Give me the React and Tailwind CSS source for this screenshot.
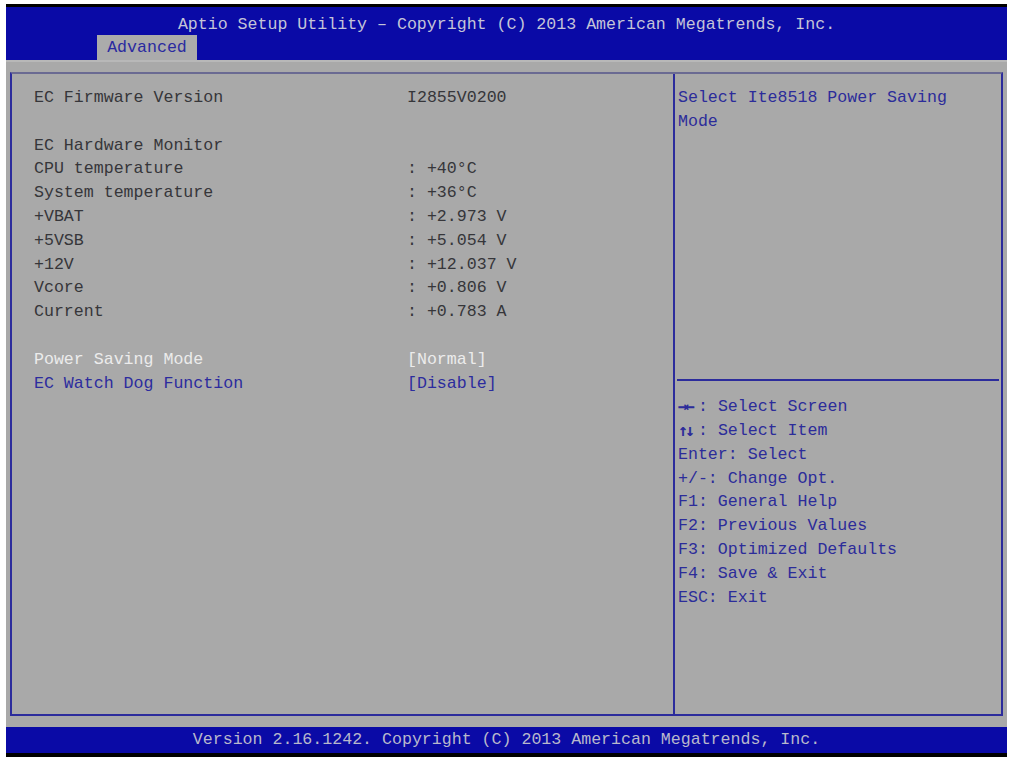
export default function App() {
  const mono = { fontFamily: '"Liberation Mono", "DejaVu Sans Mono", monospace' };
  const rows = [
    ["EC Firmware Version", "I2855V0200", "n"],
    null,
    ["EC Hardware Monitor", "", "n"],
    ["CPU temperature", ": +40°C", "n"],
    ["System temperature", ": +36°C", "n"],
    ["+VBAT", ": +2.973 V", "n"],
    ["+5VSB", ": +5.054 V", "n"],
    ["+12V", ": +12.037 V", "n"],
    ["Vcore", ": +0.806 V", "n"],
    ["Current", ": +0.783 A", "n"],
    null,
    ["Power Saving Mode", "[Normal]", "sel"],
    ["EC Watch Dog Function", "[Disable]", "opt"],
  ];
  const help = [
    ["→←", ": Select Screen"],
    ["↑↓", ": Select Item"],
    ["", "Enter: Select"],
    ["", "+/-: Change Opt."],
    ["", "F1: General Help"],
    ["", "F2: Previous Values"],
    ["", "F3: Optimized Defaults"],
    ["", "F4: Save & Exit"],
    ["", "ESC: Exit"],
  ];
  return (
    <div className="w-[1010px] h-[762px] bg-white pt-[4px] pl-[6px]" style={mono}>
      <div className="w-[1001px] h-[753px] flex flex-col text-[16.6px] whitespace-pre">
        {/* header */}
        <div className="h-[56px] border-t-[3px] border-black bg-[#0a0aa6] flex flex-col">
          <div className="pt-[8px] h-[28px] leading-[20px] text-center text-[#c4c4d8]">
            Aptio Setup Utility – Copyright (C) 2013 American Megatrends, Inc.
          </div>
          <div className="ml-[91px] w-[100px] h-[25px] bg-[#ababab] text-[#2a2aa0] leading-[25px] text-center">
            Advanced
          </div>
        </div>
        {/* main */}
        <div className="flex-1 bg-[#a9a9a9] pt-[10px] pl-[4px] pr-[4px] pb-[11px] border-t-[2px] border-[#b8b8b8]">
          <div className="h-full flex border-[2px] border-[#2c2c9c] border-t-[#6a6a92]">
            <div className="w-[663px] border-r-[2px] border-[#2c2c9c] pt-[12px] pl-[22px]">
              {rows.map((r, i) =>
                r === null ? (
                  <div key={i} className="h-[23.8px]" />
                ) : (
                  <div
                    key={i}
                    className={
                      "flex h-[23.8px] leading-[23.8px] " +
                      (r[2] === "sel"
                        ? "text-[#ececec]"
                        : r[2] === "opt"
                        ? "text-[#2c2c9e]"
                        : "text-[#36363a]")
                    }
                  >
                    <div className="w-[373px]">{r[0]}</div>
                    <div>{r[1]}</div>
                  </div>
                )
              )}
            </div>
            <div className="flex-1 flex flex-col text-[#2c2c9a]">
              <div className="h-[307px] border-b-[2px] border-[#2c2c9c] mx-[2px] pt-[12px] pl-[1px] leading-[23.8px]">
                <div>Select Ite8518 Power Saving</div>
                <div>Mode</div>
              </div>
              <div className="pt-[14px] pl-[3px] leading-[23.85px]">
                {help.map((h, i) => (
                  <div key={i} className="flex">
                    {h[0] && (
                      <span
                        className="w-[20px] font-bold tracking-[-3px]"
                        style={{ fontFamily: '"DejaVu Sans Mono", monospace' }}
                      >
                        {h[0]}
                      </span>
                    )}
                    <span>{h[1]}</span>
                  </div>
                ))}
              </div>
            </div>
          </div>
        </div>
        {/* footer */}
        <div className="h-[30px] bg-[#0a0aa6] border-b-[4px] border-black text-center text-[#b8b8cc] leading-[26px]">
          Version 2.16.1242. Copyright (C) 2013 American Megatrends, Inc.
        </div>
      </div>
    </div>
  );
}
